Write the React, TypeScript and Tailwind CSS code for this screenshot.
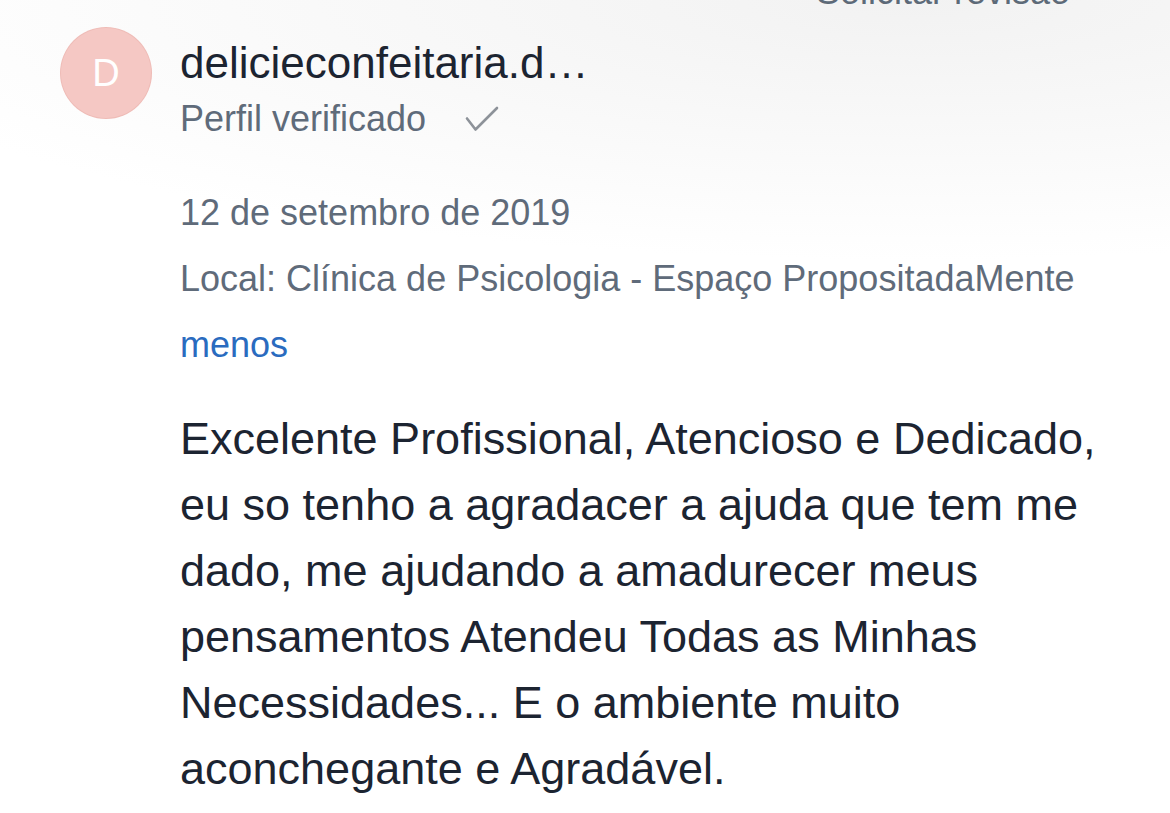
import React from "react";

const bodyLines = [
  "Excelente Profissional, Atencioso e Dedicado,",
  "eu so tenho a agradacer a ajuda que tem me",
  "dado, me ajudando a amadurecer meus",
  "pensamentos Atendeu Todas as Minhas",
  "Necessidades... E o ambiente muito",
  "aconchegante e Agradável.",
];

function CheckIcon() {
  return (
    <svg width="36" height="28" viewBox="0 0 36 28" fill="none" className="ml-[38px] mt-[2px]">
      <path
        d="M3 12.5 L11.5 23.5 L33 2"
        stroke="#8d9299"
        strokeWidth="2.6"
        strokeLinecap="round"
        strokeLinejoin="round"
      />
    </svg>
  );
}

export default function App() {
  return (
    <div
      className="h-[813px] w-[1170px] overflow-hidden bg-[radial-gradient(ellipse_95%_260px_at_78%_0%,#f2f2f2,#ffffff)] font-['Liberation_Sans',Arial,sans-serif]"
    >
      <div className="mt-[-30px] flex h-[44px] justify-end pr-[100px] text-[36px] leading-[44px] text-[#5d6a78]">
        Solicitar revisão
      </div>

      <div className="mt-[14px] flex pl-[61px]">
        <div className="flex h-[90px] w-[90px] shrink-0 items-center justify-center rounded-full bg-[#f5c8c4] ring-1 ring-[#efbcb7] text-[38px] text-white">
          D
        </div>

        <div className="ml-[29px] flex flex-col">
          <div className="mt-[9px] text-[44px] leading-[52px] text-[#1c2431]">
            delicieconfeitaria.d…
          </div>
          <div className="mt-[8px] flex items-center text-[36px] leading-[44px] text-[#5f6b7a]">
            <span>Perfil verificado</span>
            <CheckIcon />
          </div>

          <div className="mt-[39px] flex flex-col text-[36px] leading-[66px]">
            <span className="text-[#5f6b7a]">12 de setembro de 2019</span>
            <span className="whitespace-nowrap text-[#5f6b7a]">
              Local: Clínica de Psicologia - Espaço PropositadaMente
            </span>
            <span className="text-[#2a6bbf]">menos</span>
          </div>

          <p className="mt-[28px] text-[45px] leading-[66px] text-[#1c2431]">
            {bodyLines.map((line) => (
              <span key={line} className="block whitespace-nowrap">
                {line}
              </span>
            ))}
          </p>
        </div>
      </div>
    </div>
  );
}
